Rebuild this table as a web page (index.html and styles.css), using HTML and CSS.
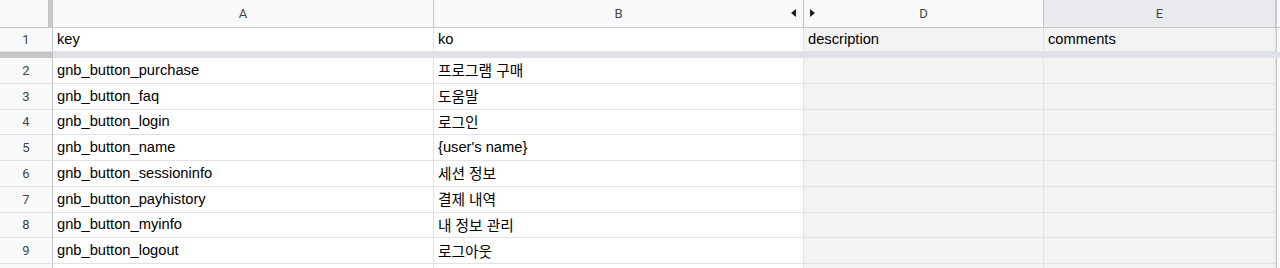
FILE: index.html
```html
<!DOCTYPE html>
<html lang="ko">
<head>
<meta charset="utf-8">
<title>Sheet</title>
<link rel="stylesheet" href="styles.css">
</head>
<body>
<div class="sheet">
  <div class="row hdr">
    <div class="corner"></div>
    <div class="ch colA">A</div>
    <div class="ch colB">B<span class="tri tri-l"></span></div>
    <div class="ch colD"><span class="tri tri-r"></span>D</div>
    <div class="ch colE sel">E</div>
    <div class="edge"></div>
  </div>
  <div class="row r1">
    <div class="rh">1</div>
    <div class="c colA">key</div>
    <div class="c colB">ko</div>
    <div class="c colD g">description</div>
    <div class="c colE g">comments</div>
    <div class="edge"></div>
  </div>
  <div class="freeze"><div class="fz-rh"></div><div class="fz-body"></div></div>
  <div class="row">
    <div class="rh">2</div><div class="c colA">gnb_button_purchase</div><div class="c colB">프로그램 구매</div><div class="c colD g"></div><div class="c colE g"></div><div class="edge"></div>
  </div>
  <div class="row">
    <div class="rh">3</div><div class="c colA">gnb_button_faq</div><div class="c colB">도움말</div><div class="c colD g"></div><div class="c colE g"></div><div class="edge"></div>
  </div>
  <div class="row">
    <div class="rh">4</div><div class="c colA">gnb_button_login</div><div class="c colB">로그인</div><div class="c colD g"></div><div class="c colE g"></div><div class="edge"></div>
  </div>
  <div class="row">
    <div class="rh">5</div><div class="c colA">gnb_button_name</div><div class="c colB">{user's name}</div><div class="c colD g"></div><div class="c colE g"></div><div class="edge"></div>
  </div>
  <div class="row">
    <div class="rh">6</div><div class="c colA">gnb_button_sessioninfo</div><div class="c colB">세션 정보</div><div class="c colD g"></div><div class="c colE g"></div><div class="edge"></div>
  </div>
  <div class="row">
    <div class="rh">7</div><div class="c colA">gnb_button_payhistory</div><div class="c colB">결제 내역</div><div class="c colD g"></div><div class="c colE g"></div><div class="edge"></div>
  </div>
  <div class="row">
    <div class="rh">8</div><div class="c colA">gnb_button_myinfo</div><div class="c colB">내 정보 관리</div><div class="c colD g"></div><div class="c colE g"></div><div class="edge"></div>
  </div>
  <div class="row">
    <div class="rh">9</div><div class="c colA">gnb_button_logout</div><div class="c colB">로그아웃</div><div class="c colD g"></div><div class="c colE g"></div><div class="edge"></div>
  </div>
  <div class="row">
    <div class="rh"></div><div class="c colA"></div><div class="c colB"></div><div class="c colD g"></div><div class="c colE g"></div><div class="edge"></div>
  </div>
</div>
</body>
</html>
```
FILE: styles.css
```css
html, body {
  margin: 0;
  padding: 0;
  background: #ffffff;
  overflow: hidden;
}
.sheet {
  width: 1280px;
  height: 268px;
  overflow: hidden;
  font-family: "Liberation Sans", Arial, "Noto Sans CJK KR", sans-serif;
  font-size: 14.7px;
  color: #000;
}
.row {
  display: grid;
  grid-template-columns: 53px 381px 370px 240px 232px 4px;
  height: 25.75px;
}
.row.hdr {
  height: 28px;
}
.row.r1 {
  height: 24px;
}
.corner {
  background: #f8f9fa;
  border-right: 5px solid #c7c7c7;
  border-bottom: 1px solid #c4c7c5;
  box-sizing: border-box;
}
.ch {
  position: relative;
  background: #f8f9fa;
  border-right: 1px solid #c4c7c5;
  border-bottom: 1px solid #c4c7c5;
  box-sizing: border-box;
  display: flex;
  align-items: center;
  justify-content: center;
  font-family: Roboto, "Liberation Sans", sans-serif;
  font-size: 13px;
  color: #444746;
}
.ch.sel {
  background: #e9eaed;
}
.tri {
  position: absolute;
  top: 9px;
  width: 0;
  height: 0;
  border-top: 4px solid transparent;
  border-bottom: 4px solid transparent;
}
.tri-l {
  right: 7px;
  border-right: 5px solid #1f1f1f;
}
.tri-r {
  left: 6px;
  border-left: 5px solid #1f1f1f;
}
.edge {
  background: #f8f9fa;
  border-left: 1px solid #c4c7c5;
  box-sizing: border-box;
}
.hdr .edge {
  border-bottom: 1px solid #c4c7c5;
}
.rh {
  background: #f8f9fa;
  border-right: 1px solid #c4c7c5;
  border-bottom: 1px solid #e1e1e1;
  box-sizing: border-box;
  display: flex;
  align-items: center;
  justify-content: center;
  font-family: Roboto, "Liberation Sans", sans-serif;
  font-size: 13px;
  color: #444746;
}
.c {
  border-right: 1px solid #e2e2e2;
  border-bottom: 1px solid #e2e2e2;
  box-sizing: border-box;
  display: flex;
  align-items: center;
  padding: 0 4px 1px;
  white-space: nowrap;
  overflow: hidden;
}
.c.g {
  background: #f3f3f3;
}
.freeze {
  display: grid;
  grid-template-columns: 53px 1227px;
  height: 6px;
}
.fz-rh {
  background: #c7c7c7;
}
.fz-body {
  background: #dfe1e8;
}
```
